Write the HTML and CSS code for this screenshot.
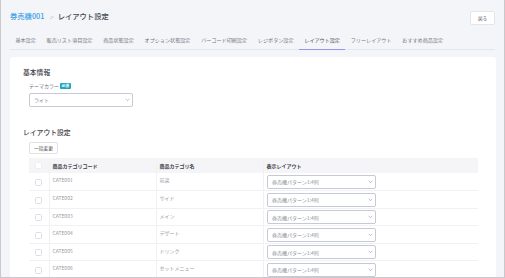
FILE: index.html
```html
<!DOCTYPE html>
<html lang="ja">
<head>
<meta charset="utf-8">
<title>レイアウト設定</title>
<link rel="stylesheet" href="styles.css">
</head>
<body>
<div class="frame">
  <header class="header">
    <h1 class="title"><span class="crumb">券売機001</span><span class="sep">&gt;</span><span class="current">レイアウト設定</span></h1>
    <button class="back">戻る</button>
  </header>
  <nav class="tabs">
    <span class="tab">基本設定</span>
    <span class="tab">販売リスト項目設定</span>
    <span class="tab">商品状態設定</span>
    <span class="tab">オプション状態設定</span>
    <span class="tab">バーコード印刷設定</span>
    <span class="tab">レジボタン設定</span>
    <span class="tab active">レイアウト設定</span>
    <span class="tab">フリーレイアウト</span>
    <span class="tab">おすすめ商品設定</span>
  </nav>
  <main class="card">
    <h2 class="section">基本情報</h2>
    <div class="field">
      <div class="label">テーマカラー<span class="badge">必須</span></div>
      <div class="select theme"><span>ライト</span><svg class="chev" viewBox="0 0 8 5"><path d="M1 1l3 3 3-3" fill="none" stroke="#8a8d99" stroke-width="0.9"/></svg></div>
    </div>
    <h2 class="section second">レイアウト設定</h2>
    <div class="field">
      <button class="bulk">一括変更</button>
      <table class="table">
        <thead>
          <tr><th class="c-check"><span class="cb head"></span></th><th class="c-code">商品カテゴリコード</th><th class="c-name">商品カテゴリ名</th><th class="c-layout">表示レイアウト</th></tr>
        </thead>
        <tbody>
          <tr><td class="c-check"><span class="cb"></span></td><td>CATE001</td><td>前菜</td><td class="c-sel"><div class="select row"><span>券売機パターン1:4列</span><svg class="chev" viewBox="0 0 8 5"><path d="M1 1l3 3 3-3" fill="none" stroke="#8a8d99" stroke-width="0.9"/></svg></div></td></tr>
          <tr><td class="c-check"><span class="cb"></span></td><td>CATE002</td><td>サイド</td><td class="c-sel"><div class="select row"><span>券売機パターン1:4列</span><svg class="chev" viewBox="0 0 8 5"><path d="M1 1l3 3 3-3" fill="none" stroke="#8a8d99" stroke-width="0.9"/></svg></div></td></tr>
          <tr><td class="c-check"><span class="cb"></span></td><td>CATE003</td><td>メイン</td><td class="c-sel"><div class="select row"><span>券売機パターン1:4列</span><svg class="chev" viewBox="0 0 8 5"><path d="M1 1l3 3 3-3" fill="none" stroke="#8a8d99" stroke-width="0.9"/></svg></div></td></tr>
          <tr><td class="c-check"><span class="cb"></span></td><td>CATE004</td><td>デザート</td><td class="c-sel"><div class="select row"><span>券売機パターン1:4列</span><svg class="chev" viewBox="0 0 8 5"><path d="M1 1l3 3 3-3" fill="none" stroke="#8a8d99" stroke-width="0.9"/></svg></div></td></tr>
          <tr><td class="c-check"><span class="cb"></span></td><td>CATE005</td><td>ドリンク</td><td class="c-sel"><div class="select row"><span>券売機パターン1:4列</span><svg class="chev" viewBox="0 0 8 5"><path d="M1 1l3 3 3-3" fill="none" stroke="#8a8d99" stroke-width="0.9"/></svg></div></td></tr>
          <tr><td class="c-check"><span class="cb"></span></td><td>CATE006</td><td>セットメニュー</td><td class="c-sel"><div class="select row"><span>券売機パターン1:4列</span><svg class="chev" viewBox="0 0 8 5"><path d="M1 1l3 3 3-3" fill="none" stroke="#8a8d99" stroke-width="0.9"/></svg></div></td></tr>
        </tbody>
      </table>
    </div>
  </main>
</div>
</body>
</html>
```

FILE: styles.css
```css
* { box-sizing: border-box; }
html, body { margin: 0; padding: 0; }
body {
  width: 505px;
  height: 278px;
  overflow: hidden;
  font-family: "Noto Sans CJK JP", "Noto Sans", sans-serif;
  background: #fff;
}
.frame {
  width: 505px;
  height: 278px;
  overflow: hidden;
  background: #f4f5f9;
  border: 1px solid #c9c9cc;
  border-top: none;
  padding: 0 8px 0 9px;
}
.header {
  display: flex;
  justify-content: space-between;
  align-items: flex-start;
  padding-top: 11px;
  height: 30px;
}
.title {
  margin: 0;
  font-size: 7.3px;
  line-height: 11px;
  font-weight: 500;
  color: #45474f;
  display: flex;
  align-items: center;
}
.crumb { color: #3b9ee6; }
.sep { color: #b8bac2; margin: 0 4px 0 5px; font-weight: 300; font-size: 8px; }
.back {
  width: 25px;
  height: 14px;
  padding: 0;
  margin-right: 1px;
  background: #fff;
  border: 1px solid #e4e5eb;
  border-radius: 2px;
  font-family: inherit;
  font-size: 4.6px;
  color: #555;
}
.tabs {
  display: flex;
  border-bottom: 1px solid #e6e7ec;
  margin-right: 1px;
}
.tab {
  font-size: 5.1px;
  line-height: 8px;
  padding: 5.5px 5.4px 5px;
  color: #74767e;
  border-bottom: 1.5px solid transparent;
  margin-bottom: -1px;
  white-space: nowrap;
}
.tab.active {
  color: #484a52;
  border-bottom-color: #9b93f2;
}
.card {
  margin-top: 7px;
  margin-right: 0;
  background: #fff;
  border-radius: 3px;
  padding: 10px 13px 20px;
  height: 240px;
}
.section {
  margin: 0;
  font-size: 6.8px;
  line-height: 10px;
  font-weight: 500;
  color: #3e4048;
}
.section.second { margin-top: 20px; }
.field { padding-left: 6px; }
.label {
  margin-top: 5.5px;
  font-size: 5px;
  line-height: 8px;
  color: #6d6f78;
  display: flex;
  align-items: center;
}
.badge {
  margin-left: 1px;
  background: #1ba6ba;
  color: #fff;
  font-size: 3.8px;
  line-height: 6px;
  padding: 0 1.5px;
  border-radius: 1px;
  font-weight: 700;
}
.select {
  display: flex;
  align-items: center;
  justify-content: space-between;
  border: 1px solid #c6c9d6;
  border-radius: 2px;
  background: #fff;
  font-size: 5px;
  color: #7b7d86;
  padding: 0 2px 0 4.5px;
}
.select.theme {
  margin-top: 2.5px;
  width: 104px;
  height: 14px;
  margin-left: -0.5px;
}
.chev { width: 5px; height: 3.5px; }
.bulk {
  margin-top: 5px;
  width: 29px;
  height: 12px;
  padding: 0;
  background: #fff;
  border: 1px solid #dfe1e8;
  border-radius: 2px;
  font-family: inherit;
  font-size: 4.8px;
  color: #444;
  display: block;
}
.table {
  margin-top: 4px;
  width: 449px;
  border-collapse: collapse;
  table-layout: fixed;
  font-size: 5px;
}
.table th {
  background: #f5f5f7;
  height: 15.5px;
  text-align: left;
  font-weight: 700;
  color: #3e4048;
  padding: 0 0 0 3px;
  line-height: 7px;
  border-left: 1px solid #f0f1f4;
}
.table td {
  height: 17.5px;
  vertical-align: top;
  padding: 3px 0 0 3px;
  line-height: 7px;
  color: #9a9ca4;
  border-bottom: 1px solid #f0f1f4;
  border-left: 1px solid #f0f1f4;
}
.table th:first-child, .table td:first-child { border-left: none; }
.c-check { width: 20px; }
.table th.c-check, .table td.c-check { padding: 0; text-align: center; }
.table td.c-check { padding-top: 4.5px; }
.c-code { width: 107px; }
.c-name { width: 107px; }
.table td.c-sel { padding: 1.5px 0 0 3px; }
.cb {
  display: inline-block;
  width: 7px;
  height: 7px;
  border: 1px solid #dcdee5;
  border-radius: 1.5px;
  background: #fff;
  vertical-align: middle;
}
.cb.head { border-color: #eceef2; }
.select.row {
  width: 109px;
  height: 14px;
  color: #8c8e96;
}
```
